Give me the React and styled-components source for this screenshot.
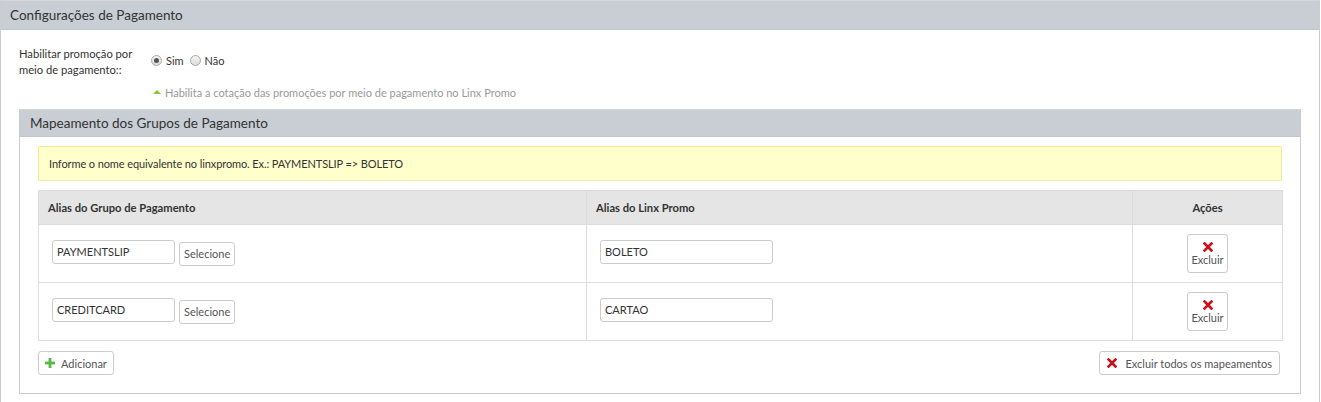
import React from "react";
import styled, { createGlobalStyle } from "styled-components";

const GlobalStyle = createGlobalStyle`
  html, body {
    margin: 0;
    padding: 0;
    background: #ffffff;
  }
  body {
    font-family: Lato, "Liberation Sans", sans-serif;
    font-size: 11px;
    color: #333;
  }
  * { box-sizing: border-box; }
`;

const Panel = styled.div`
  border: 1px solid #cccccc;
  border-top-color: #d6d6d6;
  background: #fff;
  margin: ${(p) => (p.inner ? "0" : "0 1px 0 0")};
`;

const PanelHeader = styled.div`
  background: #c8ced4;
  height: ${(p) => (p.inner ? "27px" : "29px")};
  display: flex;
  align-items: center;
  padding-left: ${(p) => (p.inner ? "10px" : "9px")};
  font-size: 13.5px;
  color: #333;
  border-bottom: 1px solid #c3c7cb;
`;

const PanelBody = styled.div`
  padding: ${(p) => p.pad};
`;

const FormRow = styled.div`
  display: flex;
  align-items: flex-start;
`;

const Label = styled.label`
  width: 132px;
  line-height: 16px;
  color: #333;
  font-size: 11.2px;
  padding-top: 1px;
`;

const Field = styled.div`
  display: flex;
  flex-direction: column;
  padding-top: 8px;
`;

const Radios = styled.div`
  display: flex;
  align-items: center;
  gap: 4px;
  height: 14px;
`;

const Radio = styled.span`
  width: 11px;
  height: 11px;
  border-radius: 50%;
  border: 1px solid #a9a9a9;
  background: linear-gradient(#f4f4f4, #dcdcdc);
  display: inline-flex;
  align-items: center;
  justify-content: center;
  &::after {
    content: "";
    width: 5px;
    height: 5px;
    border-radius: 50%;
    background: ${(p) => (p.checked ? "#555" : "transparent")};
  }
`;

const RadioText = styled.span`
  margin-right: 2px;
  color: #333;
`;

const Help = styled.div`
  margin-top: 19px;
  margin-left: 2px;
  color: #9a9a9a;
  display: flex;
  align-items: center;
  gap: 4px;
`;

const Triangle = styled.span`
  width: 0;
  height: 0;
  border-left: 4px solid transparent;
  border-right: 4px solid transparent;
  border-bottom: 4px solid #8cc63f;
  margin-bottom: 2px;
`;

const Spacer = styled.div`
  height: ${(p) => p.h}px;
`;

const Alert = styled.div`
  background: #ffffcc;
  border: 1px solid #f0ec9a;
  height: 35px;
  display: flex;
  align-items: center;
  padding-left: 10px;
  color: #333;
  letter-spacing: -0.1px;
`;

const Table = styled.table`
  width: 1245px;
  border-collapse: collapse;
  margin-top: 9px;
`;

const Th = styled.th`
  background: #e5e5e5;
  height: 34px;
  width: ${(p) => (p.w ? `${p.w}px` : "auto")};
  border: 1px solid #dddddd;
  text-align: ${(p) => p.align || "left"};
  padding: 0 9px;
  font-weight: bold;
  color: #333;
  font-size: 11.2px;
`;

const Td = styled.td`
  height: 58px;
  border: 1px solid #dddddd;
  padding: 0 13px;
  text-align: ${(p) => p.align || "left"};
  vertical-align: middle;
`;

const InputGroup = styled.div`
  display: flex;
  align-items: center;
  gap: 4px;
`;

const TextInput = styled.div`
  width: ${(p) => p.w}px;
  height: 24px;
  border: 1px solid #cccccc;
  border-radius: 3px;
  display: flex;
  align-items: center;
  padding-left: 4px;
  color: #333;
  margin-top: -4px;
`;

const Button = styled.button`
  font-family: Lato, "Liberation Sans", sans-serif;
  font-size: 11px;
  color: #555;
  background: #fff;
  border: 1px solid #cccccc;
  border-radius: 3px;
  height: 24px;
  padding: 0 ${(p) => p.px || 4}px;
  display: inline-flex;
  align-items: center;
  gap: ${(p) => p.gap || 6}px;
  cursor: pointer;
`;

const StackButton = styled(Button)`
  flex-direction: column;
  height: 39px;
  width: 41px;
  gap: 1px;
  justify-content: center;
  padding: 0;
`;

const Footer = styled.div`
  display: flex;
  justify-content: space-between;
  margin-top: 10px;
  width: 1242px;
`;

const XIcon = ({ size = 10 }) => (
  <svg width={size} height={size} viewBox="0 0 10 10">
    <path d="M1.5 1.5 L8.5 8.5 M8.5 1.5 L1.5 8.5" stroke="#c8101e" strokeWidth="2.6" strokeLinecap="square" />
  </svg>
);

const PlusIcon = () => (
  <svg width="10" height="10" viewBox="0 0 10 10">
    <rect x="3.6" y="0" width="2.8" height="10" fill="#57b846" />
    <rect x="0" y="3.6" width="10" height="2.8" fill="#57b846" />
  </svg>
);

const rows = [
  { alias: "PAYMENTSLIP", promo: "BOLETO" },
  { alias: "CREDITCARD", promo: "CARTAO" },
];

export default function App() {
  return (
    <>
      <GlobalStyle />
      <Panel>
        <PanelHeader>Configurações de Pagamento</PanelHeader>
        <PanelBody pad="15px 18px 10px 18px">
          <FormRow>
            <Label>
              Habilitar promoção por
              <br />
              meio de pagamento::
            </Label>
            <Field>
              <Radios>
                <Radio checked />
                <RadioText>Sim</RadioText>
                <Radio />
                <RadioText>Não</RadioText>
              </Radios>
              <Help>
                <Triangle />
                Habilita a cotação das promoções por meio de pagamento no Linx Promo
              </Help>
            </Field>
          </FormRow>
          <Spacer h={10} />
          <Panel inner>
            <PanelHeader inner>Mapeamento dos Grupos de Pagamento</PanelHeader>
            <PanelBody pad="9px 18px 18px 18px">
              <Alert>Informe o nome equivalente no linxpromo. Ex.: PAYMENTSLIP =&gt; BOLETO</Alert>
              <Table>
                <thead>
                  <tr>
                    <Th w={548}>Alias do Grupo de Pagamento</Th>
                    <Th w={546}>Alias do Linx Promo</Th>
                    <Th align="center">Ações</Th>
                  </tr>
                </thead>
                <tbody>
                  {rows.map((r) => (
                    <tr key={r.alias}>
                      <Td>
                        <InputGroup>
                          <TextInput w={123}>{r.alias}</TextInput>
                          <Button>Selecione</Button>
                        </InputGroup>
                      </Td>
                      <Td>
                        <TextInput w={173}>{r.promo}</TextInput>
                      </Td>
                      <Td align="center">
                        <StackButton>
                          <XIcon />
                          Excluir
                        </StackButton>
                      </Td>
                    </tr>
                  ))}
                </tbody>
              </Table>
              <Footer>
                <Button px={6} gap={6}>
                  <PlusIcon />
                  Adicionar
                </Button>
                <Button px={7} gap={8}>
                  <XIcon />
                  Excluir todos os mapeamentos
                </Button>
              </Footer>
            </PanelBody>
          </Panel>
          <Spacer h={20} />
        </PanelBody>
      </Panel>
    </>
  );
}
